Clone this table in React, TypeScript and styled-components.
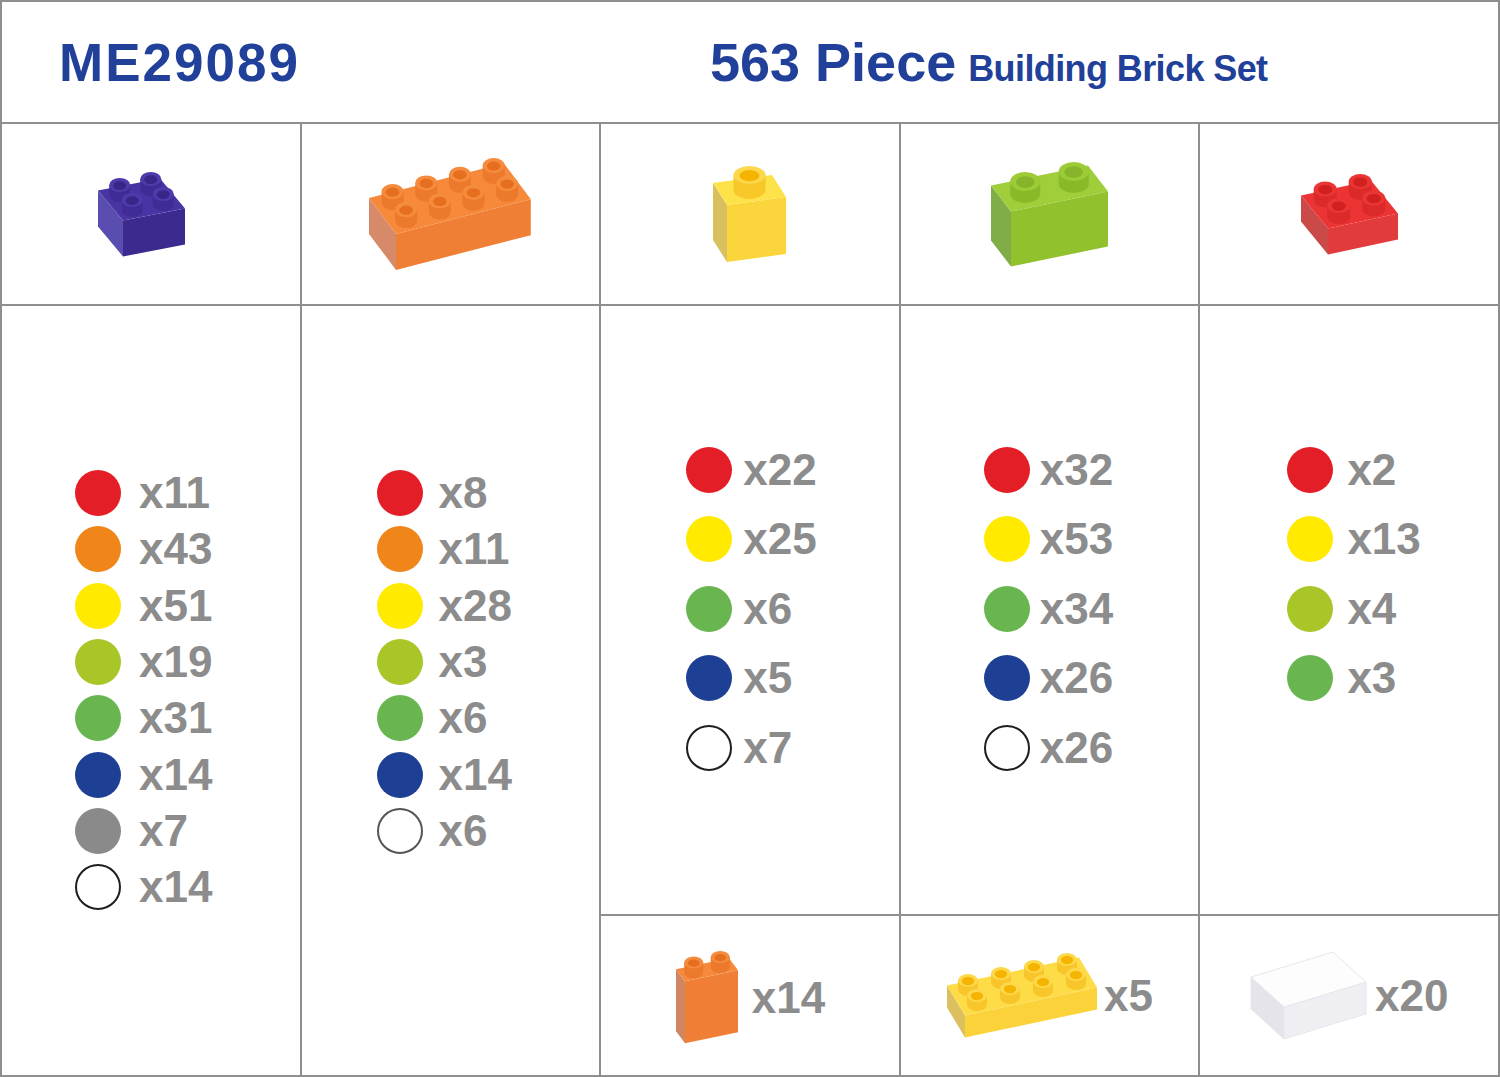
import React from "react";
import styled, { createGlobalStyle } from "styled-components";

const GlobalStyle = createGlobalStyle`
  html, body {
    margin: 0;
    padding: 0;
    background: #ffffff;
  }
  body {
    font-family: "Liberation Sans", Arial, sans-serif;
  }
`;

type V = [number, number];

interface BrickSpec {
	cols: number;
	rows: number;
	a: V;
	b: V;
	h: number;
	stud?: { rx: number; ry: number; h: number };
	top: string;
	front: string;
	side: string;
	studTop?: string;
	studSide?: string;
	hole?: string;
	edge?: string;
}

const bricks: Record<string, BrickSpec> = {
	purple: {
		cols: 2, rows: 2, a: [31, -6], b: [-12.5, -15], h: 36,
		stud: { rx: 10.5, ry: 7, h: 10 },
		top: "#4a33a3", front: "#3d2a8e", side: "#5a4db0",
		studTop: "#4f3aaa", studSide: "#402c95", hole: "#3a2588",
	},
	orange: {
		cols: 4, rows: 2, a: [33.7, -8.7], b: [-13.5, -18], h: 36,
		stud: { rx: 11, ry: 7.5, h: 11 },
		top: "#f6893a", front: "#f07f36", side: "#d68a6a",
		studTop: "#f58c3d", studSide: "#ec792c", hole: "#e66f1f",
	},
	yellow: {
		cols: 1, rows: 1, a: [59, -8], b: [-14, -22], h: 57,
		stud: { rx: 16, ry: 9, h: 15 },
		top: "#fde24a", front: "#fbd53c", side: "#d8c05e",
		studTop: "#fcd84a", studSide: "#f8c72a", hole: "#f5b400",
	},
	green: {
		cols: 2, rows: 1, a: [48.5, -10], b: [-20, -26], h: 55,
		stud: { rx: 15, ry: 9.5, h: 12 },
		top: "#a0cd3a", front: "#92c12e", side: "#80ad48",
		studTop: "#9ccb36", studSide: "#88b928", hole: "#86b52c",
	},
	red: {
		cols: 2, rows: 2, a: [35, -7.5], b: [-13.5, -16.5], h: 26,
		stud: { rx: 11.5, ry: 7.5, h: 11 },
		top: "#ec3434", front: "#e23b3b", side: "#c94a48",
		studTop: "#eb3535", studSide: "#dc2a2a", hole: "#d21f1f",
	},
	tallOrange: {
		cols: 2, rows: 1, a: [26.5, -5.5], b: [-9, -12], h: 62,
		stud: { rx: 9.5, ry: 6, h: 10 },
		top: "#f58a3c", front: "#f07e35", side: "#d08565",
		studTop: "#f58c3d", studSide: "#ec792c", hole: "#e66f1f",
	},
	plate: {
		cols: 4, rows: 2, a: [33, -7], b: [-9, -15], h: 22,
		stud: { rx: 10, ry: 6.5, h: 9 },
		top: "#fddc48", front: "#fbd23a", side: "#dcc060",
		studTop: "#fcd84a", studSide: "#f8c52a", hole: "#f5b400",
	},
	white: {
		cols: 1, rows: 1, a: [82, -25], b: [-33, -30], h: 32,
		top: "#fdfdfe", front: "#efeff3", side: "#e4e4ea", edge: "#e6e6ec",
	},
};

const add = (...vs: V[]): V => vs.reduce<V>((s, v) => [s[0] + v[0], s[1] + v[1]], [0, 0]);
const mul = (v: V, k: number): V => [v[0] * k, v[1] * k];
const pts = (...vs: V[]) => vs.map((v) => `${v[0].toFixed(1)},${v[1].toFixed(1)}`).join(" ");

function Brick({ spec }: { spec: BrickSpec }) {
	const { cols, rows, a, b, h, stud } = spec;
	const A = mul(a, cols);
	const B = mul(b, rows);
	const O: V = [0, 0];
	const T: V = [0, -h];
	const up: V = [0, -h];

	const centers: V[] = [];
	if (stud) {
		for (let i = 0; i < cols; i++) {
			for (let j = 0; j < rows; j++) {
				centers.push(add(T, mul(a, i + 0.5), mul(b, j + 0.5)));
			}
		}
		centers.sort((p, q) => p[1] - q[1]);
	}

	const corners: V[] = [O, add(O, A), add(O, B), T, add(T, A), add(T, B), add(T, A, B)];
	let minX = Math.min(...corners.map((c) => c[0]));
	let maxX = Math.max(...corners.map((c) => c[0]));
	let minY = Math.min(...corners.map((c) => c[1]));
	const maxY = Math.max(...corners.map((c) => c[1]));
	if (stud) {
		centers.forEach((c) => {
			minX = Math.min(minX, c[0] - stud.rx);
			maxX = Math.max(maxX, c[0] + stud.rx);
			minY = Math.min(minY, c[1] - stud.h - stud.ry);
		});
	}
	const w = maxX - minX + 2;
	const ht = maxY - minY + 2;
	const sw = spec.edge ? 1 : 0;

	return (
		<svg width={w} height={ht} viewBox={`${minX - 1} ${minY - 1} ${w} ${ht}`}>
			<polygon points={pts(O, add(O, B), add(O, B, up), T)} fill={spec.side} stroke={spec.edge} strokeWidth={sw} />
			<polygon points={pts(O, add(O, A), add(O, A, up), T)} fill={spec.front} stroke={spec.edge} strokeWidth={sw} />
			<polygon points={pts(T, add(T, A), add(T, A, B), add(T, B))} fill={spec.top} stroke={spec.edge} strokeWidth={sw} />
			{stud &&
				centers.map(([cx, cy], k) => {
					const ty = cy - stud.h;
					return (
						<g key={k}>
							<path
								d={`M${cx - stud.rx},${ty} L${cx - stud.rx},${cy} A${stud.rx} ${stud.ry} 0 0 0 ${cx + stud.rx},${cy} L${cx + stud.rx},${ty} Z`}
								fill={spec.studSide}
							/>
							<ellipse cx={cx} cy={ty} rx={stud.rx} ry={stud.ry} fill={spec.studTop} />
							<ellipse cx={cx} cy={ty + 0.6} rx={stud.rx * 0.62} ry={stud.ry * 0.62} fill={spec.hole} />
						</g>
					);
				})}
		</svg>
	);
}

const Board = styled.div`
	width: 1500px;
	height: 1077px;
	box-sizing: border-box;
	display: grid;
	grid-template-columns: repeat(5, 1fr);
	grid-template-rows: 120px 180px 608px 159px;
	gap: 2px;
	padding: 2px;
	background: #8e8e8e;
`;

const Header = styled.header`
	grid-column: 1 / -1;
	background: #ffffff;
	display: flex;
	align-items: center;
	color: #21409a;
	font-weight: 700;
`;

const Code = styled.div`
	width: 708px;
	box-sizing: border-box;
	padding-left: 57px;
	font-size: 53px;
	line-height: 1;
	letter-spacing: 2px;
`;

const Title = styled.div`
	display: flex;
	align-items: baseline;
	gap: 12px;
	line-height: 1;
`;

const TitleBig = styled.span`
	font-size: 54px;
`;

const TitleSmall = styled.span`
	font-size: 36px;
	letter-spacing: -0.6px;
`;

const BrickCell = styled.div<{ $dx?: number }>`
	background: #ffffff;
	display: flex;
	align-items: center;
	justify-content: center;
	padding-right: ${(p) => p.$dx ?? 0}px;
`;

const ListCell = styled.div<{ $tall?: boolean; $top: number; $left: number }>`
	background: #ffffff;
	grid-row: ${(p) => (p.$tall ? "3 / 5" : "auto")};
	padding: ${(p) => p.$top}px 0 0 ${(p) => p.$left}px;
	display: flex;
	flex-direction: column;
`;

const Item = styled.div<{ $step: number; $gap: number }>`
	height: ${(p) => p.$step}px;
	display: flex;
	align-items: center;
	gap: ${(p) => p.$gap}px;
`;

const Dot = styled.span<{ $color: string; $ring?: string }>`
	width: 46px;
	height: 46px;
	flex: none;
	box-sizing: border-box;
	border-radius: 50%;
	background: ${(p) => p.$color};
	border: ${(p) => (p.$ring ? `2px solid ${p.$ring}` : "none")};
`;

const Count = styled.span`
	font-size: 44px;
	font-weight: 700;
	line-height: 1;
	color: #8c8c8c;
`;

const ExtraCell = styled.div<{ $gap: number; $shift?: number }>`
	background: #ffffff;
	display: flex;
	align-items: center;
	justify-content: center;
	gap: ${(p) => p.$gap}px;
	padding-top: ${(p) => p.$shift ?? 0}px;
`;

const C = {
	red: "#e31e26",
	orange: "#f08519",
	yellow: "#ffea00",
	lime: "#a8c628",
	green: "#69b550",
	blue: "#1d3f94",
	gray: "#8a8a8a",
	white: "#ffffff",
};

type Entry = [string, string, string?];

const lists: { tall: boolean; top: number; left: number; step: number; gap: number; items: Entry[] }[] = [
	{
		tall: true, top: 159, left: 73, step: 56.3, gap: 18,
		items: [
			[C.red, "x11"], [C.orange, "x43"], [C.yellow, "x51"], [C.lime, "x19"],
			[C.green, "x31"], [C.blue, "x14"], [C.gray, "x7"], [C.white, "x14", "#1e1e1e"],
		],
	},
	{
		tall: true, top: 159, left: 75, step: 56.3, gap: 16,
		items: [
			[C.red, "x8"], [C.orange, "x11"], [C.yellow, "x28"], [C.lime, "x3"],
			[C.green, "x6"], [C.blue, "x14"], [C.white, "x6", "#555555"],
		],
	},
	{
		tall: false, top: 129, left: 85, step: 69.5, gap: 11,
		items: [[C.red, "x22"], [C.yellow, "x25"], [C.green, "x6"], [C.blue, "x5"], [C.white, "x7", "#1e1e1e"]],
	},
	{
		tall: false, top: 129, left: 83, step: 69.5, gap: 10,
		items: [[C.red, "x32"], [C.yellow, "x53"], [C.green, "x34"], [C.blue, "x26"], [C.white, "x26", "#1e1e1e"]],
	},
	{
		tall: false, top: 129, left: 87, step: 69.5, gap: 14,
		items: [[C.red, "x2"], [C.yellow, "x13"], [C.lime, "x4"], [C.green, "x3"]],
	},
];

export default function App() {
	return (
		<>
			<GlobalStyle />
			<Board>
				<Header>
					<Code>ME29089</Code>
					<Title>
						<TitleBig>563 Piece</TitleBig>
						<TitleSmall>Building Brick Set</TitleSmall>
					</Title>
				</Header>

				<BrickCell $dx={18}>
					<Brick spec={bricks.purple} />
				</BrickCell>
				<BrickCell>
					<Brick spec={bricks.orange} />
				</BrickCell>
				<BrickCell>
					<Brick spec={bricks.yellow} />
				</BrickCell>
				<BrickCell>
					<Brick spec={bricks.green} />
				</BrickCell>
				<BrickCell>
					<Brick spec={bricks.red} />
				</BrickCell>

				{lists.map((l, i) => (
					<ListCell key={i} $tall={l.tall} $top={l.top} $left={l.left}>
						{l.items.map(([color, label, ring], k) => (
							<Item key={k} $step={l.step} $gap={l.gap}>
								<Dot $color={color} $ring={ring} />
								<Count>{label}</Count>
							</Item>
						))}
					</ListCell>
				))}

				<ExtraCell $gap={13} $shift={4}>
					<Brick spec={bricks.tallOrange} />
					<Count>x14</Count>
				</ExtraCell>
				<ExtraCell $gap={6}>
					<Brick spec={bricks.plate} />
					<Count>x5</Count>
				</ExtraCell>
				<ExtraCell $gap={8}>
					<Brick spec={bricks.white} />
					<Count>x20</Count>
				</ExtraCell>
			</Board>
		</>
	);
}
